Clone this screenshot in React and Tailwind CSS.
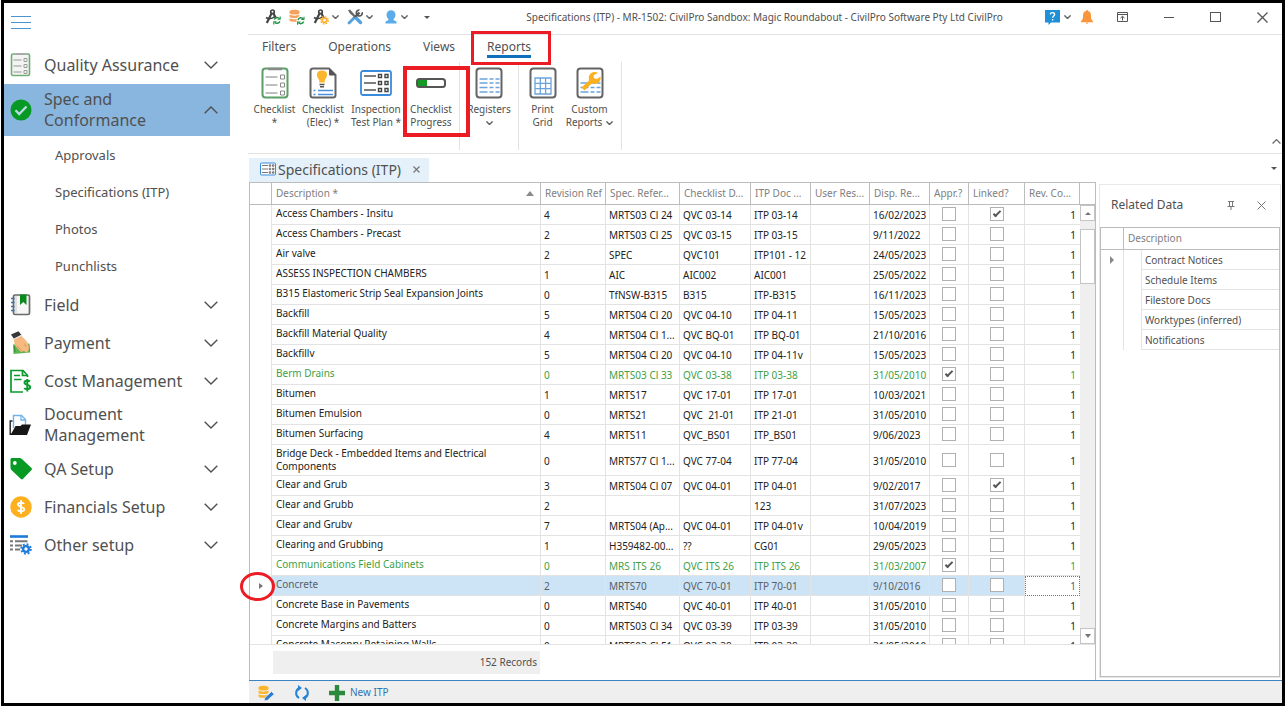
import React from "react";

const COLS = [
  { w: "w-[65px]", t: "Revision Ref" },
  { w: "w-[74px]", t: "Spec. Refer..." },
  { w: "w-[71px]", t: "Checklist D..." },
  { w: "w-[60px]", t: "ITP Doc ..." },
  { w: "w-[59px]", t: "User Res..." },
  { w: "w-[60px]", t: "Disp. Re..." },
  { w: "w-[39px]", t: "Appr.?" },
  { w: "w-[56px]", t: "Linked?" },
  { w: "w-[55px]", t: "Rev. Co..." },
];

// description, revision, spec, checklist, itp doc, date, approved, linked, style
const ROWS = [
  ["Access Chambers - Insitu", "4", "MRTS03 Cl 24", "QVC 03-14", "ITP 03-14", "16/02/2023", false, true],
  ["Access Chambers - Precast", "2", "MRTS03 Cl 25", "QVC 03-15", "ITP 03-15", "9/11/2022", false, false],
  ["Air valve", "2", "SPEC", "QVC101", "ITP101 - 12", "24/05/2023", false, false],
  ["ASSESS INSPECTION CHAMBERS", "1", "AIC", "AIC002", "AIC001", "25/05/2022", false, false],
  ["B315 Elastomeric Strip Seal Expansion Joints", "0", "TfNSW-B315", "B315", "ITP-B315", "16/11/2023", false, false],
  ["Backfill", "5", "MRTS04 Cl 20", "QVC 04-10", "ITP 04-11", "15/05/2023", false, false],
  ["Backfill Material Quality", "4", "MRTS04 Cl 1...", "QVC BQ-01", "ITP BQ-01", "21/10/2016", false, false],
  ["Backfillv", "5", "MRTS04 Cl 20", "QVC 04-10", "ITP 04-11v", "15/05/2023", false, false],
  ["Berm Drains", "0", "MRTS03 Cl 33", "QVC 03-38", "ITP 03-38", "31/05/2010", true, false, "green"],
  ["Bitumen", "1", "MRTS17", "QVC 17-01", "ITP 17-01", "10/03/2021", false, false],
  ["Bitumen Emulsion", "0", "MRTS21", "QVC  21-01", "ITP 21-01", "31/05/2010", false, false],
  ["Bitumen Surfacing", "4", "MRTS11", "QVC_BS01", "ITP_BS01", "9/06/2023", false, false],
  ["Bridge Deck - Embedded Items and Electrical Components", "0", "MRTS77 Cl 1...", "QVC 77-04", "ITP 77-04", "31/05/2010", false, false, "tall"],
  ["Clear and Grub", "3", "MRTS04 Cl 07", "QVC 04-01", "ITP 04-01", "9/02/2017", false, true],
  ["Clear and Grubb", "2", "", "", "123", "31/07/2023", false, false],
  ["Clear and Grubv", "7", "MRTS04 (Ap...", "QVC 04-01", "ITP 04-01v", "10/04/2019", false, false],
  ["Clearing and Grubbing", "1", "H359482-00...", "??", "CG01", "29/05/2023", false, false],
  ["Communications Field Cabinets", "0", "MRS ITS 26", "QVC ITS 26", "ITP ITS 26", "31/03/2007", true, false, "green"],
  ["Concrete", "2", "MRTS70", "QVC 70-01", "ITP 70-01", "9/10/2016", false, false, "sel"],
  ["Concrete Base in Pavements", "0", "MRTS40", "QVC 40-01", "ITP 40-01", "31/05/2010", false, false],
  ["Concrete Margins and Batters", "0", "MRTS03 Cl 34", "QVC 03-39", "ITP 03-39", "31/05/2010", false, false],
  ["Concrete Masonry Retaining Walls", "0", "MRTS03 Cl 51", "QVC 03-38", "ITP 03-38", "31/05/2010", false, false],
];

const Chevron = ({ up, className = "w-[14px] h-2", sw = 1.4 }) => (
  <svg viewBox="0 0 14 8" className={className} fill="none" stroke="currentColor" strokeWidth={sw}>
    <path d={up ? "M.7 7.2 7 1l6.300 6.200" : "M.7.8 7 7 13.300.8"} />
  </svg>
);
const SmallChevron = () => <Chevron className="w-[7px] h-1 text-[#666]" sw={3} />;

/* ---------- sidebar icons ---------- */
const QaIcon = () => (
  <svg viewBox="0 0 22 24" className="w-[22px] h-6" fill="none">
    <rect x="1.500" y="1" width="18" height="21.500" rx="1.500" fill="#f4f4f4" stroke="#6fae76" strokeWidth="1.600" />
    <path d="M6 1h9" stroke="#a9a9a9" strokeWidth="2" />
    <path d="M3.500 7h8M3.500 13h8M3.500 19h8" stroke="#b5b5b5" strokeWidth="1.300" />
    <path d="M14 5.500h3v3h-3zM14 11.500h3v3h-3zM14 17.500h3v3h-3z" stroke="#9c9c9c" />
  </svg>
);
const TickIcon = () => (
  <svg viewBox="0 0 22 22" className="w-[22px] h-[22px]">
    <circle cx="11" cy="11" r="10.500" fill="#069a25" />
    <path d="m5.500 11.300 3.700 3.700L16.500 7.500" fill="none" stroke="#b9dbe8" strokeWidth="2.300" />
  </svg>
);
const FieldIcon = () => (
  <svg viewBox="0 0 22 24" className="w-[22px] h-6">
    <rect x="3.500" y="2" width="16" height="19.500" rx="1.500" fill="#f6f6f6" stroke="#6a6a6a" strokeWidth="1.700" />
    <path d="M6 3v17.500" stroke="#ccc" />
    <path d="M1 5.500h3.500M1 9.500h3.500M1 13.500h3.500M1 17.500h3.500" stroke="#3b74a8" strokeWidth="1.500" />
    <path d="M10 1.500h6.500V12l-3.200-3L10 12z" fill="#0a8a1c" />
  </svg>
);
const PaymentIcon = () => (
  <svg viewBox="0 0 22 24" className="w-[22px] h-6">
    <path d="m3 13.500 16.500-1 .8 9L3.500 23z" fill="#5eb653" />
    <path d="M5 21 4.500 15.500M18.500 14.500l.5 5" stroke="#2f8c36" />
    <path d="M4 7 10.500 4l5.500 5.500c2.500 3 3.300 6 2.800 9.500l-2.300 2.800-2.500-1.800-3 1-4-4C4.500 14 3.500 10.500 4 7z" fill="#f6b980" />
    <path d="M7 15l4.500 4.500M16 16l-1.500-3.500" stroke="#d98e55" strokeWidth=".8" />
    <path d="m1 3.500 7.500-3.300L11.500 4 4 8z" fill="#37383c" />
    <path d="m3.500 8.200 8.200-4" stroke="#e8e8e8" strokeWidth="1.200" />
  </svg>
);
const CostIcon = () => (
  <svg viewBox="0 0 23 24" className="w-[23px] h-6" fill="none" stroke="#0a9a2d" strokeWidth="1.700">
    <path d="M18.500 8V6.500l-4.500-5H2v21.500h12" />
    <path d="M13.500 1.500V6.500h5M5 6.500h6M5 10.500h7.500" />
    <path d="M21 12.500c-1-1-5.500-1.500-5.500 1.200 0 2.800 5.700 1.600 5.700 4.400 0 2.700-4.700 2.400-6 1M18.300 10v12.500" strokeWidth="2" />
  </svg>
);
const DocIcon = () => (
  <svg viewBox="0 0 23 22" className="w-[23px] h-[22px]">
    <path d="M4.500 14V1.500h8l4 4V13" fill="#fff" stroke="#6fb3ea" strokeWidth="1.400" />
    <path d="M12 1.500v4.500h4.500" fill="none" stroke="#6fb3ea" strokeWidth="1.300" />
    <path d="M3.500 7H1.200v13.200H4" fill="none" stroke="#222" strokeWidth="1.400" />
    <path d="M6.500 12h5l1.500-1.500h9L18 21H1.500z" fill="#161616" />
  </svg>
);
const TagIcon = () => (
  <svg viewBox="0 0 22 22" className="w-[22px] h-[22px]">
    <path d="M1.500 0h8.300q1 0 1.800.7L21.500 10q.9 1 0 2l-8.600 9q-1 .9-2 0L1.400 12Q.5 11.200.5 10V1.200Q.5.200 1.500 0z" fill="#069a25" />
    <circle cx="4.800" cy="5" r="1.900" fill="#fff" />
  </svg>
);
const CoinIcon = () => (
  <svg viewBox="0 0 22 22" className="w-[22px] h-[22px]">
    <circle cx="11" cy="11" r="10.700" fill="#ffb01f" />
    <path d="M14 8c-.6-1.500-6-2-6 .6 0 2.700 6.200 1.700 6.200 4.600 0 2.600-5.700 2.400-6.500.6M11 4.300v13.400" fill="none" stroke="#fff" strokeWidth="1.900" />
  </svg>
);
const Gear = ({ cx, cy, r, color, hole = "#fff" }) => (
  <g>
    <circle cx={cx} cy={cy} r={r * 0.72} fill={color} />
    <circle cx={cx} cy={cy} r={r * 0.86} fill="none" stroke={color} strokeWidth={r * 0.34} strokeDasharray={`${r * 0.34} ${r * 0.335}`} />
    <circle cx={cx} cy={cy} r={r * 0.3} fill={hole} />
  </g>
);
const OtherIcon = () => (
  <svg viewBox="0 0 22 22" className="w-[22px] h-[22px]">
    <path d="M0 2.500h18" stroke="#1d7ad9" strokeWidth="2.600" />
    <path d="M0 7.300h3M5 7.300h12.500M0 11.500h3M5 11.500h7M0 15.500h3M5 15.500h5" stroke="#777" strokeWidth="2" />
    <Gear cx={16} cy={15} r={5.6} color="#1d7ad9" />
  </svg>
);

/* ---------- title bar icons ---------- */
const Compass = ({ children }) => (
  <svg viewBox="0 0 16 16" className="w-4 h-4" fill="none">
    <circle cx="7.500" cy="2.800" r="1.800" stroke="#444" strokeWidth="1.700" />
    <path d="M6.500 4.500 1.800 14M8.500 4.500l2.500 5" stroke="#444" strokeWidth="2.200" />
    <path d="M1 8.500Q5 11.500 10 7.500" stroke="#444" strokeWidth="1.600" />
    {children}
  </svg>
);
const Sync = ({ x, y }) => (
  <g transform={`translate(${x} ${y})`} fill="none" stroke="#27964b" strokeWidth="1.500">
    <path d="M.8 3.200A2.900 2.900 0 0 1 6 2.200M6.300 4.700A2.900 2.900 0 0 1 1.200 5.700" />
    <path d="M6.700 0v2.700H4M.3 8V5.300H3" strokeWidth="1.100" />
  </g>
);
const Disks = ({ color }) => (
  <g fill={color}>
    <path d="M.5 2.500C.5.300 10.500.300 10.500 2.500v1.400c0 2-10 2-10 0z" />
    <path d="M.5 5.600c2 1.400 8 1.400 10 0v2c0 2-10 2-10 0z" />
    <path d="M.5 9.300c2 1.400 8 1.400 10 0v2c0 2-10 2-10 0z" />
  </g>
);

/* ---------- ribbon icons ---------- */
const Page = ({ children, stroke = "#646464" }) => (
  <svg viewBox="0 0 28 32" className="w-7 h-8" fill="none">
    <rect x="1.500" y="1.500" width="25" height="29" rx="3" fill="#fff" stroke={stroke} strokeWidth="2" />
    {children}
  </svg>
);
const TableLines = ({ y }) => (
  <g stroke="#6ba4dc" strokeWidth="1.700">
    {y.map((v) => (
      <path key={v} d={`M4.500 ${v}h8M14.500 ${v}h4M20.500 ${v}h4`} />
    ))}
  </g>
);
const ItpIcon = ({ className, sw = 1.8 }) => (
  <svg viewBox="0 0 32 28" className={className} fill="none">
    <rect x="1" y="2" width="30" height="24" rx="2" fill="#fff" stroke="#3a8ade" strokeWidth={sw} />
    <path d="M4 7h12M4 14h12M4 21h12" stroke="#555" strokeWidth="1.600" />
    <path d="M18.500 5.500h3v3h-3zM25 5.500h3v3h-3zM18.500 12.500h3v3h-3zM25 12.500h3v3h-3zM18.500 19.500h3v3h-3zM25 19.500h3v3h-3z" stroke="#444" strokeWidth="1.400" />
  </svg>
);

const NavRow = ({ icon, children, open, className = "h-[38px]" }) => (
  <button
    type="button"
    className={`flex w-full items-center pl-[5px] pr-3 text-left text-[16px] leading-[21px] ${className}`}
  >
    <span className="flex w-[23px] shrink-0 justify-center">{icon}</span>
    <span className="ml-3 flex-1">{children}</span>
    <Chevron up={open} />
  </button>
);

const RibbonButton = ({ icon, lines, className, chevron, mark }) => (
  <button type="button" className={`relative flex flex-col items-center pt-[5px] ${className}`}>
    <span className="flex h-8 items-center">{icon}</span>
    <span className="mt-1 flex flex-col items-center whitespace-nowrap text-[10px] leading-[13px]">
      <span>{lines[0]}</span>
      <span className="flex h-[13px] items-center gap-1">
        {lines[1]}
        {chevron && <SmallChevron />}
      </span>
    </span>
    {mark && <span className="pointer-events-none absolute -left-[2px] top-1 z-10 h-[71px] w-[67px] border-4 border-[#ec1c24]" />}
  </button>
);

const Tab = ({ children }) => (
  <button type="button" className="block text-[12px] leading-5">{children}</button>
);

const Check = ({ label, on }) => (
  <input
    type="checkbox"
    aria-label={label}
    defaultChecked={on}
    className={
      "relative mx-auto block h-[14px] w-[14px] appearance-none border border-[#b0b0b0] bg-white " +
      "checked:after:absolute checked:after:left-[4px] checked:after:top-px checked:after:h-2 checked:after:w-1 " +
      "checked:after:rotate-45 checked:after:border-b-2 checked:after:border-r-2 checked:after:border-[#555] checked:after:content-['']"
    }
  />
);

const SpecRow = ({ row }) => {
  const [desc, rev, spec, qvc, itp, date, appr, linked, kind] = row;
  const sel = kind === "sel";
  const color = kind === "green" ? "text-[#3f9f45]" : sel ? "text-[#5a6066]" : "text-[#222]";
  const h = kind === "tall" ? "h-[31px]" : "h-5";
  const cell = "border-b border-r border-[#e3e3e3] p-0 pl-[3px] pt-[2px] whitespace-pre overflow-hidden";
  const box = "border-b border-r border-[#e3e3e3] p-0 pb-px";
  return (
    <tr className={`${color} ${h} ${sel ? "bg-[#cde4f6]" : "bg-white"}`}>
      <td className="relative border-r border-[#e3e3e3] bg-white p-0">
        {sel && (
          <>
            <span className="mx-auto block h-0 w-0 border-y-[3px] border-l-4 border-y-transparent border-l-[#777]" />
            <span className="pointer-events-none absolute -left-[10px] -top-[4px] z-20 h-[29px] w-[35px] rounded-[50%] border-[3px] border-[#ec1c24]" />
          </>
        )}
      </td>
      <td className="border-b border-r border-[#e3e3e3] p-0 pl-1 pr-8 align-top leading-[13px]">
        <span className="block pt-[2px]">{desc}</span>
      </td>
      {[rev, spec, qvc, itp, "", date].map((v, i) => (
        <td key={i} className={cell}>{v}</td>
      ))}
      <td className={box}><Check label={`${desc} approved`} on={appr} /></td>
      <td className={box}><Check label={`${desc} linked`} on={linked} /></td>
      <td className={`p-0 text-right ${sel ? "border border-dotted border-[#777] bg-white pr-[3px] pt-px" : "border-b border-[#e3e3e3] pr-1 pt-[2px]"}`}>1</td>
    </tr>
  );
};

export default function App() {
  return (
    <div className="h-screen min-h-[620px] bg-white pb-px pl-px font-['Noto_Sans','Liberation_Sans',sans-serif] text-[10px] text-[#505050]">
      <div className="flex h-full border-[3px] border-black bg-white">
        {/* sidebar */}
        <nav aria-label="Modules" className="flex w-[244px] shrink-0 flex-col pr-[18px]">
          <button type="button" aria-label="Menu" className="ml-[7px] mt-3 flex h-[15px] w-5 flex-col justify-between py-px">
            <span className="h-px w-full bg-[#4a96d3]" />
            <span className="h-px w-full bg-[#4a96d3]" />
            <span className="h-px w-full bg-[#4a96d3]" />
          </button>
          <div className="mt-4">
            <NavRow icon={<QaIcon />}>Quality Assurance</NavRow>
            <NavRow icon={<TickIcon />} open className="h-[52px] bg-[#89b6de]">Spec and<br />Conformance</NavRow>
            <ul className="py-px">
              {["Approvals", "Specifications (ITP)", "Photos", "Punchlists"].map((t) => (
                <li key={t} className="flex h-[37px] items-center pl-[51px] text-[13px]">
                  <a href={`#${t}`}>{t}</a>
                </li>
              ))}
            </ul>
            <NavRow icon={<FieldIcon />}>Field</NavRow>
            <NavRow icon={<PaymentIcon />}>Payment</NavRow>
            <NavRow icon={<CostIcon />}>Cost Management</NavRow>
            <NavRow icon={<DocIcon />} className="h-[50px]">Document<br />Management</NavRow>
            <NavRow icon={<TagIcon />}>QA Setup</NavRow>
            <NavRow icon={<CoinIcon />}>Financials Setup</NavRow>
            <NavRow icon={<OtherIcon />}>Other setup</NavRow>
          </div>
        </nav>

        <main className="flex min-w-0 flex-1 flex-col">
          {/* title bar */}
          <header className="flex h-8 shrink-0 items-center border-b border-[#e2e2e2] pb-[3px] pl-[17px] pr-[14px]">
            <button type="button" aria-label="Refresh design"><Compass><Sync x={8.500} y={7.500} /></Compass></button>
            <button type="button" aria-label="Refresh data" className="ml-2">
              <svg viewBox="0 0 16 16" className="h-4 w-4"><Disks color="#f5a25d" /><circle cx="12" cy="11.500" r="4.500" fill="#fff" /><Sync x={8.300} y={7.800} /></svg>
            </button>
            <button type="button" aria-label="Design settings" className="ml-2 flex items-center gap-[3px]">
              <Compass><Gear cx={11.5} cy={11.3} r={4.3} color="#f9b233" /></Compass><SmallChevron />
            </button>
            <button type="button" aria-label="Tools" className="ml-2 flex items-center gap-[3px]">
              <svg viewBox="0 0 16 16" className="h-4 w-4" fill="none">
                <path d="m12.500 3.500-6 6" stroke="#555" strokeWidth="2.400" />
                <path d="M15.200 3.200A3 3 0 1 1 12.500 1" stroke="#555" strokeWidth="1.700" />
                <path d="M1 1.200 3 .500l2 2.300 3.500 4L7 8 3 4.500z" fill="#666" />
                <path d="m9.500 9.500 4 4" stroke="#4fa3e0" strokeWidth="3.400" strokeLinecap="round" />
                <path d="M2 14 6.500 9.500" stroke="#4fa3e0" strokeWidth="2.800" strokeLinecap="round" />
              </svg>
              <SmallChevron />
            </button>
            <button type="button" aria-label="Account" className="ml-3 flex items-center gap-1">
              <svg viewBox="0 0 12 14" className="h-[14px] w-3" fill="#5badea"><ellipse cx="6" cy="5" rx="4.500" ry="4.800" /><path d="M3.500 8h5v2l3 1.500v2H.5v-2l3-1.500z" /></svg>
              <SmallChevron />
            </button>
            <button type="button" aria-label="Customise toolbar" className="ml-4 h-0 w-0 border-x-[3px] border-t-[3px] border-x-transparent border-t-[#555]" />
            <h1 className="min-w-0 flex-1 truncate pl-[54px] text-center text-[10px]">Specifications (ITP) - MR-1502: CivilPro Sandbox: Magic Roundabout - CivilPro Software Pty Ltd CivilPro</h1>
            <button type="button" aria-label="Help" className="flex items-center gap-1">
              <svg viewBox="0 0 15 15" className="h-[15px] w-[15px]"><path d="M0 0h15v12.500H6l-2.500 2.500v-2.500H0z" fill="#1f8fd6" /><path d="M5.300 4.300c.3-2.300 4.500-2.200 4.300.2-.1 1.500-2 1.500-2 3.300M7.600 9v1.600" fill="none" stroke="#fff" strokeWidth="1.400" /></svg>
              <SmallChevron />
            </button>
            <button type="button" aria-label="Notifications" className="ml-[10px]">
              <svg viewBox="0 0 12 14" className="h-[14px] w-3" fill="#f9963b"><path d="M6 0q1 0 1 1c2.500.5 3 2.500 3 5 0 3 .5 4 2 5v1.300H0V11c1.500-1 2-2 2-5 0-2.500.5-4.500 3-5q0-1 1-1zM4.500 12.800h3L6 14z" /></svg>
            </button>
            <button type="button" aria-label="Ribbon display" className="ml-6">
              <svg viewBox="0 0 11 10" className="h-[10px] w-[11px]" fill="none" stroke="#555"><path d="M.5.500h10v9H.5zM.5 2.500h10M5.500 8.500V4.500M3.500 6l2-1.700L7.500 6" /></svg>
            </button>
            <button type="button" aria-label="Minimise" className="ml-9 h-px w-[10px] bg-[#555]" />
            <button type="button" aria-label="Maximise" className="ml-9 h-[10px] w-[11px] border border-[#555]" />
            <button type="button" aria-label="Close" className="ml-9">
              <svg viewBox="0 0 11 11" className="h-[11px] w-[11px]" stroke="#555" strokeWidth="1.300"><path d="m.5.500 10 10M10.500.500l-10 10" /></svg>
            </button>
          </header>

          {/* ribbon */}
          <div className="flex h-[27px] shrink-0 items-center gap-8 pb-[3px] pl-[14px]">
            <Tab>Filters</Tab>
            <Tab>Operations</Tab>
            <Tab>Views</Tab>
            <div className="relative">
              <Tab>Reports</Tab>
              <span className="absolute -bottom-[1px] left-0 h-[3px] w-full bg-[#1170be]" />
              <span className="pointer-events-none absolute -left-4 -top-[6px] z-10 h-[34px] w-20 border-[3px] border-[#ec1c24]" />
            </div>
          </div>
          <div className="flex h-[92px] shrink-0 border-b border-[#e2e2e2] pb-[3px] pl-[2px]">
            <div className="flex border-r border-[#e2e2e2] pr-[2px]">
              <RibbonButton
                className="w-[49px]"
                lines={["Checklist", "*"]}
                icon={
                  <Page stroke="#5b9f66">
                    <path d="M7 2h14" stroke="#8a8a8a" strokeWidth="2.500" />
                    <path d="M4.500 10h12M4.500 18h12M4.500 26h12" stroke="#aaa" strokeWidth="1.400" />
                    <path d="M19.500 8h4v4h-4zM19.500 16h4v4h-4zM19.500 24h4v4h-4z" stroke="#8a8a8a" />
                  </Page>
                }
              />
              <RibbonButton
                className="w-12"
                lines={["Checklist", "(Elec) *"]}
                icon={
                  <svg viewBox="0 0 28 32" className="h-8 w-7" fill="none">
                    <path d="M4 1.500h16l6.500 6.500v20q0 2.500-2.500 2.500H4q-2.500 0-2.500-2.500V4Q1.500 1.500 4 1.500z" fill="#fff" stroke="#646464" strokeWidth="2" />
                    <path d="M20.500 2v6h5.500z" fill="#555" stroke="#555" />
                    <path d="M13 3.500c6.500 0 6 6 2.800 9.500v2.500h-5.600V13C7 9.500 6.500 3.500 13 3.500z" fill="#fbb62c" />
                    <path d="M10.500 17.500h5M11 19.800h4" stroke="#555" strokeWidth="1.400" />
                    <path d="M4.500 23.500h2M9 23.500h15M4.500 27.500h2M9 27.500h15" stroke="#4b90dc" strokeWidth="1.700" />
                  </svg>
                }
              />
              <RibbonButton className="w-[58px]" lines={["Inspection", "Test Plan *"]} icon={<ItpIcon className="h-7 w-8" />} />
              <RibbonButton
                className="w-[52px]"
                mark
                lines={["Checklist", "Progress"]}
                icon={
                  <svg viewBox="0 0 30 10" className="h-[10px] w-[30px]"><rect x="1" y="1" width="28" height="8" rx="2.500" fill="#fff" stroke="#555" strokeWidth="2" /><path d="M2 2h9v6H2z" fill="#129a25" /></svg>
                }
              />
            </div>
            <div className="border-r border-[#e2e2e2]">
              <RibbonButton className="w-[58px]" chevron lines={["Registers", ""]} icon={<Page><TableLines y={[12, 16, 20.5, 25]} /></Page>} />
            </div>
            <div className="flex border-r border-[#e2e2e2] pr-2">
              <RibbonButton
                className="w-[47px]"
                lines={["Print", "Grid"]}
                icon={<Page><path d="M6 11h16v16H6zM6 16.300h16M6 21.600h16M11.300 11v16M16.600 11v16" stroke="#6ba4dc" strokeWidth="1.300" /></Page>}
              />
              <RibbonButton
                className="w-[47px]"
                chevron
                lines={["Custom", "Reports"]}
                icon={
                  <Page>
                    <TableLines y={[16, 20.5, 25]} />
                    <path d="m7 22 9.500-9" stroke="#fbb01f" strokeWidth="4" />
                    <path d="M22 6a6 6 0 1 0 2.500 3.500L21 12l-3-.8-.5-3z" fill="#fbb01f" />
                  </Page>
                }
              />
            </div>
            <button type="button" aria-label="Collapse ribbon" className="mb-[6px] ml-auto mr-px mt-auto text-[#666]">
              <Chevron up className="h-[5px] w-[9px]" sw={2} />
            </button>
          </div>

          {/* document tabs */}
          <div className="flex h-7 shrink-0 items-end justify-between pl-px pr-[5px]">
            <div className="flex h-6 items-center bg-[#e4f1fa] pb-[2px] pl-[11px] pr-[9px]">
              <ItpIcon className="h-[14px] w-4" sw={2} />
              <h2 className="ml-[2px] text-[14px]">Specifications (ITP)</h2>
              <button type="button" aria-label="Close tab" className="ml-3">
                <svg viewBox="0 0 7 7" className="h-[7px] w-[7px]" stroke="#777" strokeWidth="1.200"><path d="m.5.500 6 6M6.500.500l-6 6" /></svg>
              </button>
            </div>
            <button type="button" aria-label="Tab list" className="mb-3 h-0 w-0 border-x-[3px] border-t-[3px] border-x-transparent border-t-[#555]" />
          </div>

          <div className="flex min-h-0 flex-1 pl-px">
            {/* specifications grid */}
            <section className="flex min-w-0 flex-1 flex-col border border-b-0 border-[#bcbcbc]">
              <div className="flex min-h-0 flex-1 border-b border-[#e3e3e3]">
                <div className="min-w-0 flex-1 overflow-y-clip">
                  <table className="w-full table-fixed border-separate border-spacing-0">
                    <thead className="text-[#808080]">
                      <tr className="h-[22px]">
                        <th className="w-[22px] border-b border-r border-[#bcbcbc] p-0" />
                        <th className="border-b border-r border-[#bcbcbc] p-0 pl-1 pr-[6px] font-normal">
                          <span className="flex items-center justify-between">
                            Description *
                            <span className="h-0 w-0 border-x-4 border-b-[5px] border-x-transparent border-b-[#8a8a8a]" />
                          </span>
                        </th>
                        {COLS.map((c) => (
                          <th key={c.t} className={`${c.w} overflow-hidden whitespace-nowrap border-b border-r border-[#bcbcbc] p-0 pl-1 text-left font-normal`}>{c.t}</th>
                        ))}
                      </tr>
                    </thead>
                    <tbody>
                      {ROWS.map((r) => <SpecRow key={r[0]} row={r} />)}
                    </tbody>
                  </table>
                </div>
                <div className="flex w-[15px] shrink-0 flex-col bg-[#efefef]">
                  <div className="h-[22px] border-b border-[#bcbcbc] bg-white" />
                  <button type="button" aria-label="Scroll up" className="flex h-4 items-center justify-center border border-[#c4c4c4] bg-white">
                    <span className="h-0 w-0 border-x-[3px] border-b-[3px] border-x-transparent border-b-[#777]" />
                  </button>
                  <div className="mt-2 h-[55px] border border-[#c4c4c4] bg-white" />
                  <button type="button" aria-label="Scroll down" className="mt-auto flex h-4 items-center justify-center border border-[#c4c4c4] bg-white">
                    <span className="h-0 w-0 border-x-[3px] border-t-[4px] border-x-transparent border-t-[#777]" />
                  </button>
                </div>
              </div>
              <div className="flex h-[35px] shrink-0 items-center pl-[23px] pr-[555px]">
                <div className="flex h-[23px] flex-1 items-center justify-end bg-[#efefef] pr-[3px]">152 Records</div>
              </div>
            </section>

            {/* related data */}
            <aside className="mb-[2px] ml-[3px] mr-px mt-[2px] flex w-[182px] shrink-0 flex-col border border-[#e8e8e8]">
              <div className="flex h-[42px] shrink-0 items-center pb-[2px] pl-[11px] pr-[14px]">
                <h2 className="flex-1 text-[12px]">Related Data</h2>
                <button type="button" aria-label="Pin">
                  <svg viewBox="0 0 8 9" className="h-[9px] w-2" fill="none" stroke="#777"><path d="M1 .500h6M2.500.500v4.500M5.500.500v4.500M.5 5.500h7M4 5.500V9" /></svg>
                </button>
                <button type="button" aria-label="Close related data" className="ml-[22px]">
                  <svg viewBox="0 0 9 9" className="h-[9px] w-[9px]" stroke="#777"><path d="m.5.500 8 8M8.500.500l-8 8" /></svg>
                </button>
              </div>
              <div className="flex-1 border border-[#bcbcbc]">
                <table className="w-full table-fixed border-separate border-spacing-0">
                  <thead className="text-[#808080]">
                    <tr className="h-[22px]">
                      <th className="w-[23px] border-b border-r border-[#bcbcbc] p-0" />
                      <th className="w-[18px] border-b border-[#bcbcbc] p-0" />
                      <th className="border-b border-[#bcbcbc] p-0 text-left font-normal"><span className="-ml-[14px]">Description</span></th>
                    </tr>
                  </thead>
                  <tbody>
                    {["Contract Notices", "Schedule Items", "Filestore Docs", "Worktypes (inferred)", "Notifications"].map((t, i) => (
                      <tr key={t} className="h-5">
                        <td className="border-r border-[#e3e3e3] p-0">
                          {i === 0 && <span className="mx-auto block h-0 w-0 border-y-[4px] border-l-4 border-y-transparent border-l-[#888]" />}
                        </td>
                        <td className="border-r border-[#e3e3e3] p-0" />
                        <td className="border-b border-[#e3e3e3] p-0 pl-[3px] pt-[2px]">{t}</td>
                      </tr>
                    ))}
                  </tbody>
                </table>
              </div>
            </aside>
          </div>

          {/* status bar */}
          <footer className="ml-px flex h-[23px] shrink-0 items-center border-t border-[#3c83c4] bg-[#efefef] pl-[9px] pt-px">
            <button type="button" aria-label="Edit data">
              <svg viewBox="0 0 17 16" className="h-4 w-[17px]"><Disks color="#fbb62c" /><path d="m6 16 1-3.500 6.500-6 2.800 2.700-6.800 6z" fill="#2b7cd3" stroke="#efefef" strokeWidth=".8" /></svg>
            </button>
            <button type="button" aria-label="Refresh" className="ml-[19px]">
              <svg viewBox="0 0 16 16" className="h-4 w-4" fill="none" stroke="#2283d8" strokeWidth="2"><path d="M5 13A5.600 5.600 0 0 1 5.500 3M11 3a5.600 5.600 0 0 1-.5 10" /><path d="M4 0l4 3-4 3zM12 16l-4-3 4-3z" fill="#2283d8" stroke="none" /></svg>
            </button>
            <button type="button" className="ml-[19px] flex items-center gap-[5px] text-[#2f74b5]">
              <svg viewBox="0 0 16 16" className="h-4 w-4" fill="#2c8a3c"><path d="M5.800 0h4.400v5.800H16v4.400h-5.800V16H5.800v-5.800H0V5.800h5.800z" /></svg>
              New ITP
            </button>
          </footer>
        </main>
      </div>
    </div>
  );
}
